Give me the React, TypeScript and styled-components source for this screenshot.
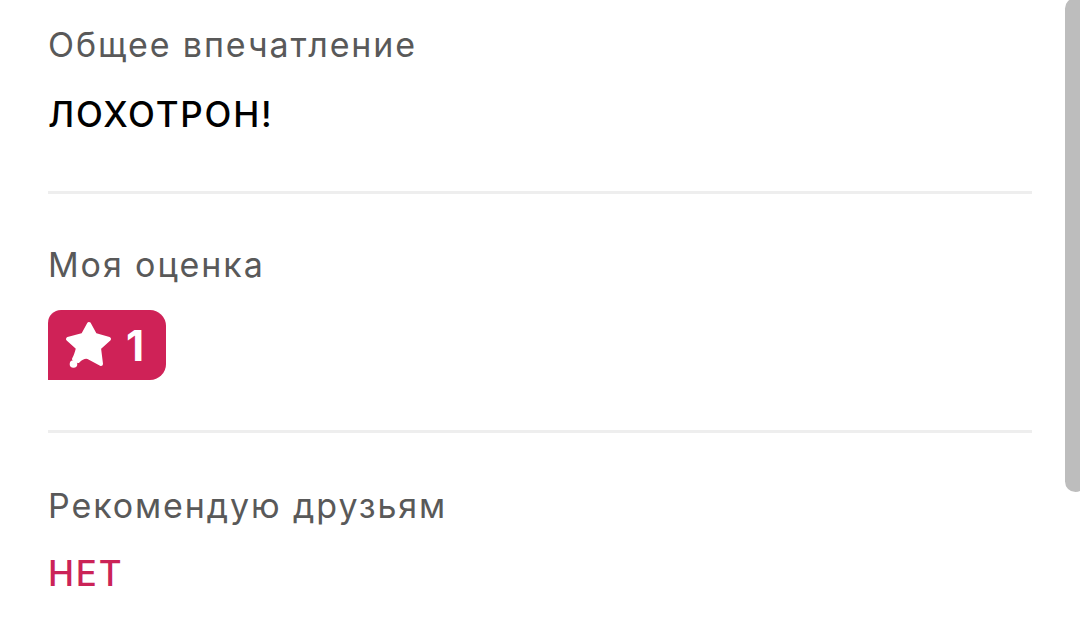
import * as React from 'react';
import styled, { createGlobalStyle } from 'styled-components';

const GlobalStyle = createGlobalStyle`
  html, body {
    margin: 0;
    padding: 0;
    background: #ffffff;
    overflow: hidden;
  }
  body {
    font-family: Inter, Roboto, 'Noto Sans', sans-serif;
  }
`;

const Page = styled.main`
  position: relative;
  width: 1080px;
  height: 632px;
  box-sizing: border-box;
  padding: 0 48px;
`;

const Section = styled.section<{ $top: number; $bottom: number; $last?: boolean }>`
  padding: ${p => p.$top}px 0 ${p => p.$bottom}px;
  border-bottom: ${p => (p.$last ? 'none' : '3px solid #eeeeee')};
`;

const Label = styled.div`
  font-size: 34px;
  line-height: 40px;
  letter-spacing: 1.9px;
  color: #595959;
  font-weight: 400;
`;

const Value = styled.div<{ $accent?: boolean; $gap: number }>`
  margin-top: ${p => p.$gap}px;
  font-size: 35px;
  line-height: 44px;
  letter-spacing: 1.8px;
  font-weight: 500;
  color: ${p => (p.$accent ? '#cb2357' : '#000000')};
`;

const Rating = styled.div`
  margin-top: 25px;
  display: inline-flex;
  align-items: center;
  gap: 14px;
  height: 70px;
  box-sizing: border-box;
  padding: 0 22px 0 16px;
  background: #cf2257;
  border-radius: 13px 16px 16px 0;
  color: #ffffff;
  font-size: 42px;
  font-weight: 700;
`;

const Scrollbar = styled.div`
  position: absolute;
  top: -2px;
  right: -6px;
  width: 21px;
  height: 494px;
  background: #bdbdbd;
  border-radius: 12px;
`;

const StarIcon = () => (
  <svg width="48" height="50" viewBox="0 0 48 50" aria-hidden>
    <path
      d="M25 4 L31 15 L45 19 L35 28 L37 44 L24 37 C20 36 17 38 14 41 L10 39 C12 36 13 32 14 28 L4 19 L19 15 Z"
      fill="#ffffff"
      stroke="#ffffff"
      strokeWidth="4"
      strokeLinejoin="round"
    />
    <circle cx="9.5" cy="44" r="3.8" fill="#ffffff" />
  </svg>
);

export default function App() {
  return (
    <>
      <GlobalStyle />
      <Page>
        <Section $top={25} $bottom={55}>
          <Label>Общее впечатление</Label>
          <Value $gap={27}>ЛОХОТРОН!</Value>
        </Section>
        <Section $top={51} $bottom={50}>
          <Label>Моя оценка</Label>
          <Rating>
            <StarIcon />
            <span>1</span>
          </Rating>
        </Section>
        <Section $top={53} $bottom={0} $last>
          <Label>Рекомендую друзьям</Label>
          <Value $accent $gap={25}>НЕТ</Value>
        </Section>
        <Scrollbar />
      </Page>
    </>
  );
}
